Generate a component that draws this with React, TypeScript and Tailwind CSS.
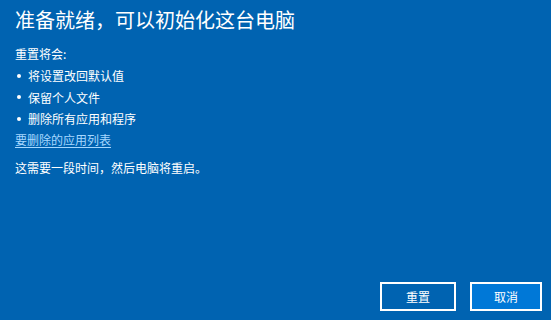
export default function App() {
  const font = { fontFamily: '"Noto Sans CJK SC", "Noto Sans", sans-serif' };
  const bullet = (
    <span className="w-[13px] flex items-center">
      <span className="ml-[2px] w-[4px] h-[4px] rounded-full bg-white" />
    </span>
  );
  return (
    <div style={font} className="w-[551px] h-[320px] bg-[#0063b1] text-white flex flex-col pl-[15px] pr-[9px] pt-[6px] pb-[9px] overflow-hidden">
      <h1 className="text-[20px] leading-[28px] font-normal">准备就绪，可以初始化这台电脑</h1>
      <div className="mt-[10px] text-[12px] leading-[20px]">重置将会:</div>
      <ul className="text-[12px] leading-[21.5px] mt-[1px]">
        <li className="flex items-center">{bullet}将设置改回默认值</li>
        <li className="flex items-center">{bullet}保留个人文件</li>
        <li className="flex items-center">{bullet}删除所有应用和程序</li>
      </ul>
      <a className="text-[12px] leading-[19px] text-[#a6d8ff] underline underline-offset-2 w-fit">要删除的应用列表</a>
      <div className="mt-[9px] text-[12px] leading-[20px]">这需要一段时间，然后电脑将重启。</div>
      <div className="mt-auto flex justify-end gap-[14px]">
        <button className="w-[76px] h-[29px] border-2 border-white bg-[#0063b1] text-[12px] text-white">重置</button>
        <button className="w-[72px] h-[29px] border-2 border-white bg-[#0078d7] text-[12px] text-white">取消</button>
      </div>
    </div>
  );
}
